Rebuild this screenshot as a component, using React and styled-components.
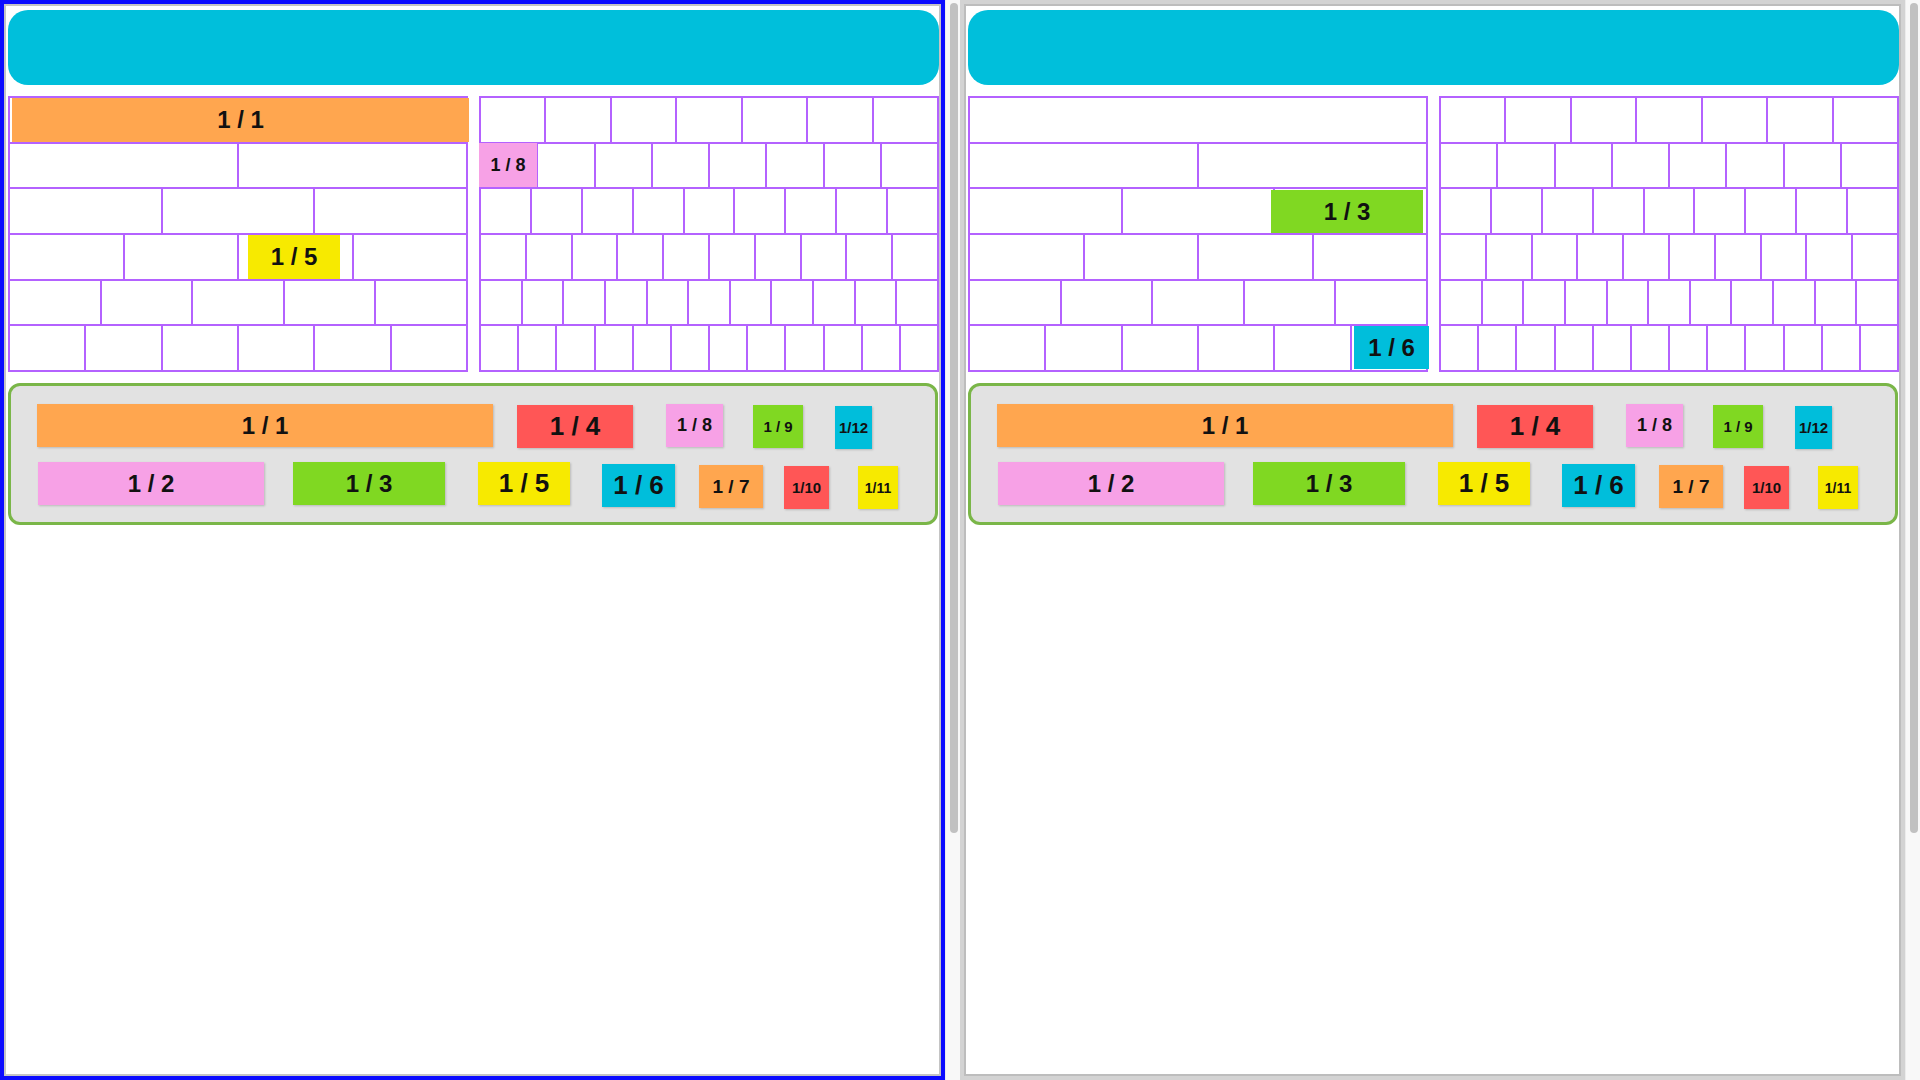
import React from 'react'
import styled, { createGlobalStyle } from 'styled-components'

const GlobalStyle = createGlobalStyle`
  html, body {
    margin: 0;
    padding: 0;
    background: #ffffff;
    overflow: hidden;
  }
  body {
    font-family: "Liberation Sans", Arial, sans-serif;
  }
`

const COLORS = {
  orange: '#ffa64f',
  red: '#ff5656',
  pink: '#f7a1e6',
  green: '#80d822',
  cyan: '#00bedb',
  yellow: '#f7ea00',
}

const Screen = styled.div`
  display: flex;
  width: 1920px;
  height: 1080px;
`

const Panel = styled.div`
  display: flex;
  width: 960px;
  height: 1080px;
`

const Frame = styled.div`
  box-sizing: border-box;
  width: 945px;
  height: 1080px;
  border: 4px solid ${p => (p.$active ? '#0b0bff' : '#d3d3d3')};
  box-shadow: inset 0 0 0 2px ${p => (p.$active ? '#c4c4c4' : '#bdbdbd')};
  padding: 6px 2px 0 4px;
  background: #ffffff;
  display: flex;
  flex-direction: column;
  gap: 11px;
`

const Scrollbar = styled.div`
  width: 15px;
  height: 1080px;
  background: #f8f8f8;
  border-left: 1px solid #ececec;
  box-sizing: border-box;
  padding: 3px 0 0 4px;
`

const Thumb = styled.div`
  width: 8px;
  height: 830px;
  border-radius: 4px;
  background: #c1c1c1;
`

const Header = styled.div`
  height: 75px;
  border-radius: 20px;
  background: #00bfdb;
`

const Walls = styled.div`
  display: grid;
  grid-template-columns: 1fr 1fr;
  gap: 11px;
`

const Wall = styled.div`
  position: relative;
  box-sizing: border-box;
  height: 276px;
  border: 1px solid #b462ff;
  display: flex;
  flex-direction: column;
`

const WallRow = styled.div`
  flex: 1;
  display: flex;
`

const Cell = styled.div`
  flex: 1;
  border: 1px solid #b462ff;
  background: #ffffff;
`

const Piece = styled.div`
  box-sizing: border-box;
  display: flex;
  align-items: center;
  justify-content: center;
  background: ${p => COLORS[p.$color]};
  color: #111111;
  font-weight: bold;
  font-size: ${p => p.$fs}px;
  white-space: nowrap;
  box-shadow: 1px 1px 2px rgba(0, 0, 0, 0.18);
`

const PlacedPiece = styled(Piece).attrs(p => ({
  style: { left: p.$x, top: p.$y, width: p.$w, height: p.$h },
}))`
  position: absolute;
  box-shadow: none;
`

const Tray = styled.div`
  box-sizing: border-box;
  height: 142px;
  border: 3px solid #7ab648;
  border-radius: 12px;
  background: #e2e2e2;
  padding-top: 18px;
  margin-right: 1px;
  display: flex;
  flex-direction: column;
  gap: 15px;
`

const TrayRow = styled.div`
  display: flex;
  align-items: flex-start;
  height: 43px;
`

const TrayPiece = styled(Piece)`
  flex: none;
  width: ${p => p.$w}px;
  height: 43px;
  margin-left: ${p => p.$ml}px;
  margin-top: ${p => p.$mt}px;
`

const trayRows = [
  [
    { label: '1 / 1', color: 'orange', w: 456, ml: 26, mt: 0, fs: 24 },
    { label: '1 / 4', color: 'red', w: 116, ml: 24, mt: 1, fs: 26 },
    { label: '1 / 8', color: 'pink', w: 57, ml: 33, mt: 0, fs: 18 },
    { label: '1 / 9', color: 'green', w: 50, ml: 30, mt: 1, fs: 15 },
    { label: '1/12', color: 'cyan', w: 37, ml: 32, mt: 2, fs: 15 },
  ],
  [
    { label: '1 / 2', color: 'pink', w: 226, ml: 27, mt: 0, fs: 24 },
    { label: '1 / 3', color: 'green', w: 152, ml: 29, mt: 0, fs: 24 },
    { label: '1 / 5', color: 'yellow', w: 92, ml: 33, mt: 0, fs: 26 },
    { label: '1 / 6', color: 'cyan', w: 73, ml: 32, mt: 2, fs: 26 },
    { label: '1 / 7', color: 'orange', w: 64, ml: 24, mt: 3, fs: 19 },
    { label: '1/10', color: 'red', w: 45, ml: 21, mt: 4, fs: 15 },
    { label: '1/11', color: 'yellow', w: 40, ml: 29, mt: 4, fs: 14 },
  ],
]

const panels = [
  {
    active: true,
    walls: [
      {
        rows: [1, 2, 3, 4, 5, 6],
        pieces: [
          { label: '1 / 1', color: 'orange', x: 3, y: 1, w: 457, h: 44, fs: 24 },
          { label: '1 / 5', color: 'yellow', x: 239, y: 138, w: 92, h: 44, fs: 24 },
        ],
      },
      {
        rows: [7, 8, 9, 10, 11, 12],
        pieces: [{ label: '1 / 8', color: 'pink', x: -1, y: 46, w: 58, h: 44, fs: 18 }],
      },
    ],
  },
  {
    active: false,
    walls: [
      {
        rows: [1, 2, 3, 4, 5, 6],
        pieces: [
          { label: '1 / 3', color: 'green', x: 302, y: 93, w: 152, h: 43, fs: 24 },
          { label: '1 / 6', color: 'cyan', x: 385, y: 229, w: 75, h: 43, fs: 24 },
        ],
      },
      { rows: [7, 8, 9, 10, 11, 12], pieces: [] },
    ],
  },
]

const FractionWall = ({ rows, pieces }) => (
  <Wall>
    {rows.map(n => (
      <WallRow key={n}>
        {Array.from({ length: n }).map((_, i) => (
          <Cell key={i} />
        ))}
      </WallRow>
    ))}
    {pieces.map(p => (
      <PlacedPiece key={p.label} $color={p.color} $x={p.x} $y={p.y} $w={p.w} $h={p.h} $fs={p.fs}>
        {p.label}
      </PlacedPiece>
    ))}
  </Wall>
)

const PieceTray = () => (
  <Tray>
    {trayRows.map((row, r) => (
      <TrayRow key={r}>
        {row.map(p => (
          <TrayPiece key={p.label} $color={p.color} $w={p.w} $ml={p.ml} $mt={p.mt} $fs={p.fs}>
            {p.label}
          </TrayPiece>
        ))}
      </TrayRow>
    ))}
  </Tray>
)

const App = () => (
  <>
    <GlobalStyle />
    <Screen>
      {panels.map((panel, i) => (
        <Panel key={i}>
          <Frame $active={panel.active}>
            <Header />
            <Walls>
              {panel.walls.map((w, j) => (
                <FractionWall key={j} rows={w.rows} pieces={w.pieces} />
              ))}
            </Walls>
            <PieceTray />
          </Frame>
          <Scrollbar>
            <Thumb />
          </Scrollbar>
        </Panel>
      ))}
    </Screen>
  </>
)

export default App
